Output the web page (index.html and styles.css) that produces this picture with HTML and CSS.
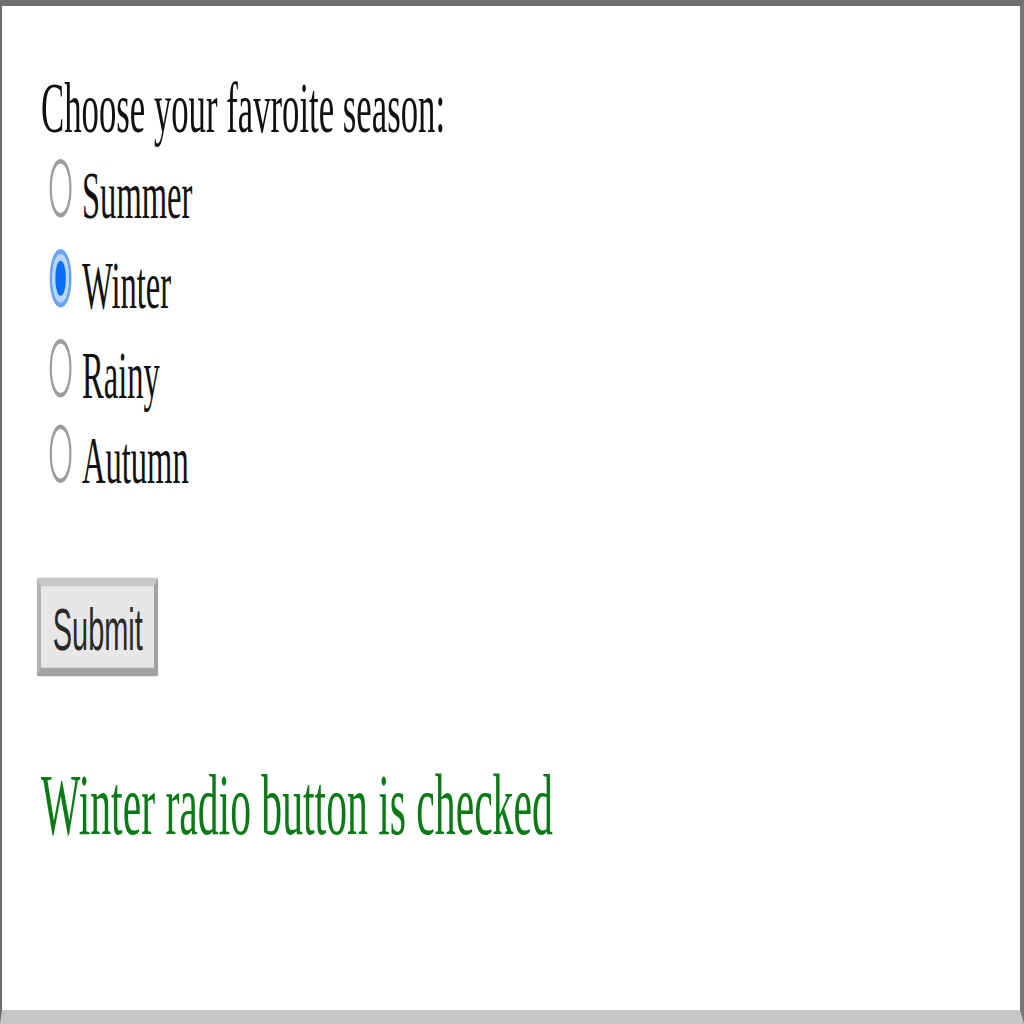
FILE: index.html
```html
<!DOCTYPE html>
<html>
<head>
<meta charset="utf-8">
<link rel="stylesheet" href="styles.css">
</head>
<body>
<div class="frame">
  <div class="stage">
    <form class="form">
      <p class="question">Choose your favroite season:</p>
      <label class="option"><input class="radio" type="radio" name="season" value="Summer">Summer</label>
      <label class="option"><input class="radio" type="radio" name="season" value="Winter" checked>Winter</label>
      <label class="option"><input class="radio" type="radio" name="season" value="Rainy">Rainy</label>
      <label class="option"><input class="radio" type="radio" name="season" value="Autumn">Autumn</label>
      <button class="submit" type="button">Submit</button>
    </form>
    <p class="result">Winter radio button is checked</p>
  </div>
</div>
</body>
</html>
```
FILE: styles.css
```css
html, body {
  margin: 0;
  padding: 0;
  background: #ffffff;
}

.frame {
  width: 1024px;
  height: 1024px;
  box-sizing: border-box;
  border-top: 6px solid #6e6e6e;
  border-left: 2px solid #6e6e6e;
  border-right: 4px solid #767676;
  border-bottom: 14px solid #c6c6c6;
  overflow: hidden;
  background: #ffffff;
}

.stage {
  width: 469px;
  box-sizing: border-box;
  padding: 12.6px 0 0 18px;
  transform: scale(2.17, 4.5);
  transform-origin: 0 0;
  font-family: "Liberation Serif", "Times New Roman", serif;
  font-size: 16px;
  color: #111111;
}

.form {
  display: flex;
  flex-direction: column;
  align-items: flex-start;
  margin: 0;
}

.question {
  margin: 0 0 1.3px 0;
  line-height: 19.6px;
}

.option {
  display: block;
  font-size: 15px;
  line-height: 19.6px;
}

.radio {
  appearance: none;
  -webkit-appearance: none;
  box-sizing: border-box;
  width: 10.6px;
  height: 13px;
  margin: 0 4.6px 0 3.7px;
  border: 1px solid #9c9c9c;
  border-radius: 50%;
  background: #ffffff;
  vertical-align: baseline;
}

.radio:checked {
  border-color: #6aa6f5;
  background: #0a6ff2;
  box-shadow: inset 0 0 0 1.6px #bcd6fb;
}

.submit {
  margin: 15.2px 0 0 -1.6px;
  padding: 1.5px 5px;
  border-style: solid;
  border-width: 2px;
  border-color: #c8c8c8 #a2a2a2 #a4a4a4 #b2b2b2;
  border-radius: 1px;
  background: #e7e7e7;
  font-family: "Liberation Sans", Arial, sans-serif;
  font-size: 13.33px;
  color: #2a2a2a;
}

.result {
  margin: 17.6px 0 0 0;
  font-size: 19.2px;
  color: #0a7a14;
}
```
